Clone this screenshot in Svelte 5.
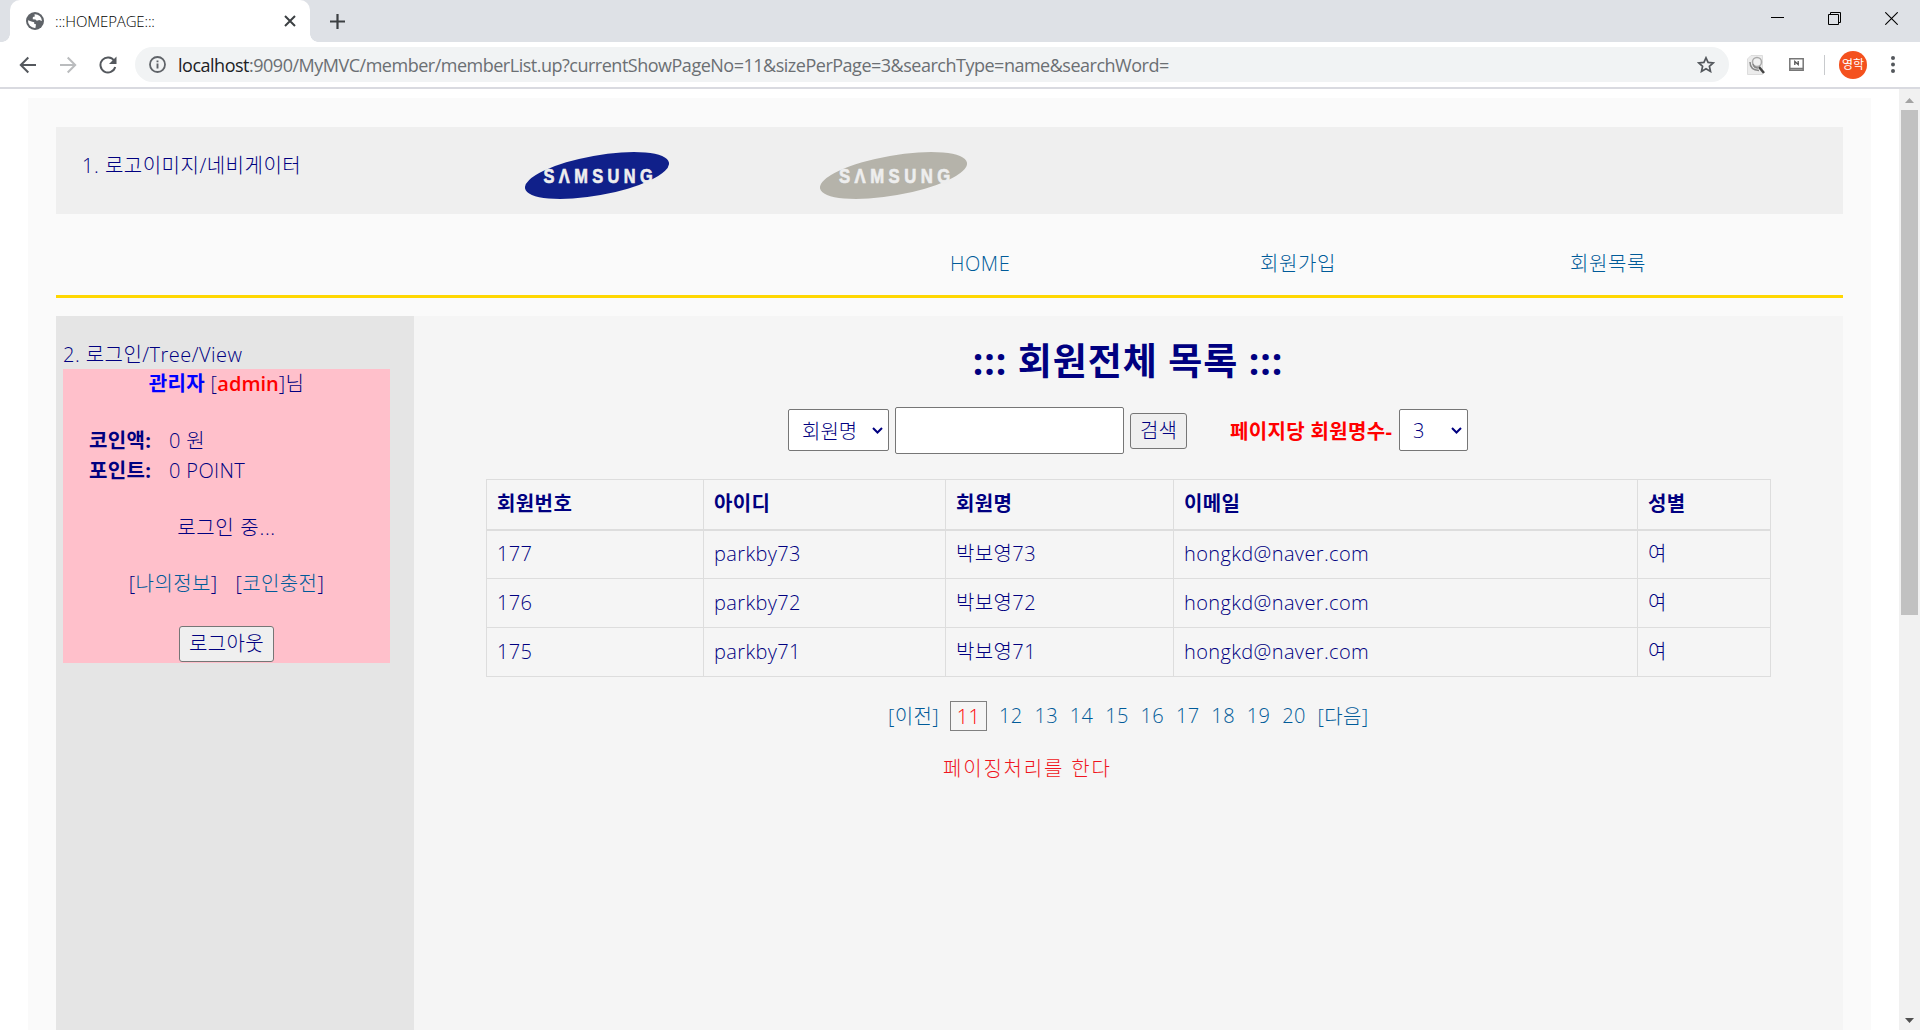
<script>
  const nav = ['HOME', '회원가입', '회원목록'];
  const logos = [
    { color: '#10208a', width: 144 },
    { color: '#b5b3aa', width: 147 },
  ];
  const columns = ['회원번호', '아이디', '회원명', '이메일', '성별'];
  const members = ['73', '72', '71'].map((n) => [
    String(104 + Number(n)),
    'parkby' + n,
    '박보영' + n,
    'hongkd@naver.com',
    '여',
  ]);
  const pages = [12, 13, 14, 15, 16, 17, 18, 19, 20];
</script>

<div class="window">
  <div class="tabs">
    <div class="tab">
      <svg class="globe" width="18" height="18" viewBox="0 0 18 18">
        <circle cx="9" cy="9" r="9" fill="#5f6368" />
        <path d="M2 8.2 6.2 9.8 8.2 10.2 8.3 12 10 12.2 9.4 15.9A7 7 0 0 1 2 8.2M8.5 2.2A7 7 0 0 1 16 9L13.2 8.1 10.8 8.7 9.5 7.4 6.7 7.2 6.9 5 8.8 4.5Z" fill="#fff" />
      </svg>
      <span class="tabtitle">:::HOMEPAGE:::</span>
      <svg width="12" height="12" viewBox="0 0 12 12"><path d="M1 1 11 11M11 1 1 11" stroke="#3c4043" stroke-width="2" /></svg>
    </div>
    <svg class="plus" width="15" height="15" viewBox="0 0 15 15"><path d="M7.500 0V15M0 7.500H15" stroke="#3c4043" stroke-width="2.200" /></svg>
    <div class="winbtns">
      <svg width="13" height="13" viewBox="0 0 13 13"><path d="M0 5.5H13" stroke="#000" /></svg>
      <svg width="13" height="13" viewBox="0 0 13 13"><path d="M.5 2.5H10.500V12.500H.5ZM2.500 2.500V.5H12.500V10.500H10.500" fill="none" stroke="#000" /></svg>
      <svg width="13" height="13" viewBox="0 0 13 13"><path d="M.3.3 12.700 12.700M12.700.3.3 12.700" stroke="#000" stroke-width="1.100" /></svg>
    </div>
  </div>

  <div class="toolbar">
    <div class="navicons">
      <svg width="18" height="18" viewBox="0 0 18 18"><path d="M17 9H2M9.300 1.500 1.800 9 9.300 16.500" fill="none" stroke="#54585d" stroke-width="2" /></svg>
      <svg width="18" height="18" viewBox="0 0 18 18"><path d="M1 9H16M8.700 1.500 16.200 9 8.700 16.500" fill="none" stroke="#babcbe" stroke-width="2" /></svg>
      <svg width="18" height="18" viewBox="0 0 18 18"><path d="M15.200 4.800A7.500 7.500 0 1 0 16.200 11" fill="none" stroke="#54585d" stroke-width="2" /><path d="M17.500.500V8H10Z" fill="#54585d" /></svg>
    </div>
    <div class="omnibox">
      <svg width="17" height="17" viewBox="0 0 17 17"><circle cx="8.500" cy="8.500" r="7.500" fill="none" stroke="#5f6368" stroke-width="1.800" /><path d="M8.500 7.500V12.500M8.500 4.500V6.300" stroke="#5f6368" stroke-width="1.900" /></svg>
      <span class="url"><b>localhost</b>:9090/MyMVC/member/memberList.up?currentShowPageNo=11&amp;sizePerPage=3&amp;searchType=name&amp;searchWord=</span>
      <svg class="star" width="18" height="17" viewBox="0 0 18 17"><path d="M9 1.800 11.100 6.400 16.200 6.900 12.400 10.300 13.500 15.400 9 12.700 4.500 15.400 5.600 10.300 1.800 6.900 6.900 6.400Z" fill="none" stroke="#54585d" stroke-width="1.700" /></svg>
    </div>
    <svg class="ext1" width="18" height="20" viewBox="0 0 18 20"><path d="M4 .5H15.500V19.500H.5V4Z" fill="#ececec" stroke="#ddd" /><circle cx="10" cy="7" r="4.500" fill="#f1f1f1" stroke="#aaa" stroke-width="1.500" /><path d="M3 7Q3 15 12 15.500M6 9Q7 13 11 13" fill="none" stroke="#888" stroke-width="1.500" /><path d="M12 12 17 18" stroke="#444" stroke-width="2.500" /></svg>
    <svg class="ext2" width="15" height="13" viewBox="0 0 15 13"><path d="M.8.800H14.200V12.200H.8ZM1 10.500H14" fill="none" stroke="#777" stroke-width="1.500" /><path d="M5.800 7V3.500L9.200 6.500V3" fill="none" stroke="#555" stroke-width="1.300" /></svg>
    <span class="sep"></span>
    <span class="avatar">영학</span>
    <svg class="dots" width="4" height="17" viewBox="0 0 4 17"><g fill="#54585d"><circle cx="2" cy="2" r="2" /><circle cx="2" cy="8.500" r="2" /><circle cx="2" cy="15" r="2" /></g></svg>
  </div>

  <div class="viewport">
    <div class="page">
      <header>
        <span class="caption">1. 로고이미지/네비게이터</span>
        {#each logos as logo}
          <svg class="logo" width={logo.width} height="47" viewBox="0 0 144 47" preserveAspectRatio="none">
            <ellipse cx="72" cy="23.500" rx="73.100" ry="19.900" transform="rotate(-10.200 72 23.500)" fill={logo.color} />
            <text transform="translate(18.500 30.500) scale(.78 1)" textLength="140" lengthAdjust="spacing">SΛMSUNG</text>
          </svg>
        {/each}
      </header>
      <nav>
        {#each nav as item}<a href="#top">{item}</a>{/each}
      </nav>
      <div class="body">
        <aside>
          <div class="line sidecap">2. 로그인/Tree/View</div>
          <div class="login">
            <div class="line user"><b class="blue">관리자</b> [<b class="red">admin</b>]님</div>
            <div class="line info"><b>코인액:</b><span>0 원</span></div>
            <div class="line info second"><b>포인트:</b><span>0 POINT</span></div>
            <div class="line state">로그인 중...</div>
            <div class="line links"><span>[<a href="#me">나의정보</a>]</span><span>[<a href="#coin">코인충전</a>]</span></div>
            <button class="logout">로그아웃</button>
          </div>
        </aside>
        <main>
          <h2>::: 회원전체 목록 :::</h2>
          <div class="search">
            <div class="select type"><span>회원명</span><svg width="11" height="7" viewBox="0 0 11 7"><path d="M1 1 5.500 5.500 10 1" fill="none" stroke="navy" stroke-width="2" /></svg></div>
            <div class="input"></div>
            <button class="go">검색</button>
            <b class="per">페이지당 회원명수-</b>
            <div class="select size"><span>3</span><svg width="11" height="7" viewBox="0 0 11 7"><path d="M1 1 5.500 5.500 10 1" fill="none" stroke="navy" stroke-width="2" /></svg></div>
          </div>
          <table>
            <colgroup><col class="c1" /><col class="c2" /><col class="c3" /><col class="c4" /><col class="c5" /></colgroup>
            <thead><tr>{#each columns as c}<th>{c}</th>{/each}</tr></thead>
            <tbody>
              {#each members as row}<tr>{#each row as cell}<td>{cell}</td>{/each}</tr>{/each}
            </tbody>
          </table>
          <div class="pager">
            <a class="prev" href="#prev">[이전]</a><span class="current">11</span>
            {#each pages as p}<a class="num" href="#p">{p}</a>{/each}
            <a class="next" href="#next">[다음]</a>
          </div>
          <p class="note">페이징처리를 한다</p>
        </main>
      </div>
    </div>
    <div class="scroll">
      <svg width="9" height="5" viewBox="0 0 9 5"><path d="M4.500 0 9 5H0Z" fill="#a3a3a3" /></svg>
      <div class="thumb"></div>
      <svg class="down" width="9" height="5" viewBox="0 0 9 5"><path d="M0 0H9L4.500 5Z" fill="#505050" /></svg>
    </div>
  </div>
</div>

<style>
  :global(body) { margin: 0; overflow: hidden; background: #fff; }
  .window { width: 1920px; height: 1030px; display: flex; flex-direction: column; overflow: hidden; font-family: "Open Sans", "Noto Sans CJK KR", sans-serif; }
  .window, .window * { box-sizing: border-box; }
  svg { display: block; flex: none; }
  .tabs { height: 42px; background: #dee1e6; display: flex; align-items: center; flex: none; padding-left: 10px; }
  .tab { width: 300px; height: 42px; background: #fff; border-radius: 10px 10px 0 0; display: flex; align-items: center; padding: 0 14px 0 16px; position: relative; }
  .tab::before, .tab::after { content: ""; position: absolute; bottom: 0; width: 8px; height: 8px; }
  .tab::before { left: -8px; background: radial-gradient(circle at 0 0, #dee1e6 7.500px, #fff 8px); }
  .tab::after { right: -8px; background: radial-gradient(circle at 100% 0, #dee1e6 7.500px, #fff 8px); }
  .tabtitle { flex: 1; margin-left: 11px; font-size: 15px; font-weight: 300; letter-spacing: -0.15px; color: #000; white-space: nowrap; }
  .plus { margin-left: 20px; }
  .winbtns { margin-left: auto; display: flex; gap: 44px; padding: 0 22px 5px 0; }
  .toolbar { height: 47px; border-bottom: 2px solid #d9dae0; display: flex; align-items: center; flex: none; background: #fff; }
  .navicons { width: 135px; display: flex; gap: 22px; padding-left: 19px; }
  .omnibox { width: 1594px; height: 35px; border-radius: 18px; background: #f1f3f4; display: flex; align-items: center; padding: 0 14px; }
  .url { flex: 1; margin-left: 12px; font-size: 18px; color: #6b6f73; white-space: nowrap; letter-spacing: -0.49px; }
  .url b { font-weight: 400; color: #202124; }
  .ext1 { margin-left: 18px; }
  .ext2 { margin-left: 24px; }
  .sep { width: 1px; height: 20px; background: #c8cacd; margin-left: 20px; }
  .avatar { width: 28px; height: 28px; border-radius: 50%; background: #f4511e; color: #fff; font-size: 12px; line-height: 28px; text-align: center; margin-left: 14px; }
  .dots { margin-left: 24px; }
  .viewport { flex: 1; display: flex; padding-left: 28px; color: navy; font-size: 20px; font-weight: 300; letter-spacing: .38px; min-height: 0; }
  b { font-weight: 700; }
  .page { width: 1843px; margin: 9px 28px 0 0; background: #fafafa; padding: 29px 28px 0; }
  a { color: #005b99; text-decoration: none; }
  header { height: 87px; background: #efefef; display: flex; padding-left: 26px; }
  .caption { width: 443px; margin-top: 25px; line-height: 28px; letter-spacing: .5px; white-space: nowrap; }
  .logo { margin: 25px 151px 0 0; }
  .logo text { font: bold 21px "Liberation Sans", sans-serif; fill: #eee; stroke: #eee; stroke-width: .7px; letter-spacing: 0; }
  nav { height: 84px; border-bottom: 3px solid gold; display: grid; grid-template-columns: repeat(3, 310px); padding: 36px 0 0 894px; line-height: 28px; margin-bottom: 18px; letter-spacing: .6px; }
  .body { display: flex; height: 714px; }
  aside { width: 358px; background: #e5e5e5; padding: 25px 24px 0 7px; }
  .sidecap { letter-spacing: .46px; }
  .line { height: 28px; line-height: 28px; white-space: nowrap; }
  .login { height: 294px; background: pink; text-align: center; padding-top: 1px; }
  .blue { color: blue; }
  .red { color: red; font-weight: 600; letter-spacing: 0; }
  .info { display: flex; margin-top: 29px; padding-left: 26px; }
  .info b { width: 80px; text-align: left; }
  .info.second { margin-top: 2px; }
  .state { margin-top: 29px; letter-spacing: .7px; }
  .links { display: flex; justify-content: center; gap: 18px; margin-top: 28px; }
  button { font: inherit; color: inherit; letter-spacing: 0; background: #efefef; border: 1px solid #767676; border-radius: 3px; padding: 0; height: 36px; line-height: 32px; white-space: nowrap; display: block; }
  .logout { width: 95px; margin: 28px auto 0; letter-spacing: .35px; }
  main { width: 1429px; background: #f5f5f5; padding-left: 72px; }
  h2 { width: 1284px; margin: 22px 0 0; font-size: 37px; letter-spacing: .95px; line-height: 46px; text-align: center; font-weight: 700; }
  .search { display: flex; align-items: center; height: 47px; margin: 23px 0 25px; padding-left: 302px; letter-spacing: 0; }
  .select { height: 42px; margin-bottom: 1px; border: 1px solid #767676; border-radius: 2px; background: #fff; display: flex; align-items: center; justify-content: space-between; padding: 0 5px 0 13px; }
  .type { width: 101px; }
  .size { width: 69px; }
  .input { width: 229px; height: 47px; border: 1px solid #767676; border-radius: 2px; background: #fff; margin: 0 6px; }
  .go { width: 57px; }
  .per { color: red; width: 169px; margin-left: 43px; letter-spacing: .35px; white-space: nowrap; }
  table { width: 1285px; table-layout: fixed; border-collapse: collapse; }
  .c1 { width: 217px; } .c2 { width: 242px; } .c3 { width: 228px; } .c4 { width: 464px; } .c5 { width: 133px; }
  th, td { border: 1px solid #ddd; text-align: left; height: 49px; padding: 0 10px; line-height: 28px; }
  th { border-bottom-width: 2px; height: 50px; letter-spacing: .4px; }
  .pager { display: flex; align-items: center; height: 30px; margin-top: 24px; padding-left: 402px; white-space: nowrap; }
  .pager a { margin-bottom: 2px; }
  .prev { width: 62px; }
  .current { width: 37px; height: 30px; border: 1px solid gray; color: red; text-align: center; line-height: 29px; margin-right: 12px; }
  .num { width: 35.4px; }
  .note { margin: 23px 0 0 457px; color: #f01420; line-height: 30px; letter-spacing: 1.8px; }
  .scroll { width: 21px; background: #f1f1f1; display: flex; flex-direction: column; align-items: center; padding-top: 9px; }
  .thumb { width: 17px; height: 505px; background: #c1c1c1; margin-top: 7px; }
  .down { margin: auto 0 7px; }
</style>
